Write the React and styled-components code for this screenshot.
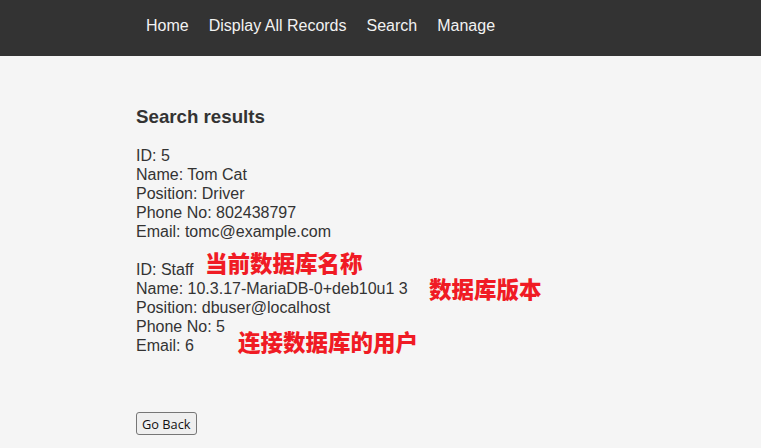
import styled, { createGlobalStyle } from "styled-components";

const GlobalStyle = createGlobalStyle`
  html, body {
    margin: 0;
    padding: 0;
    background: #f5f5f5;
  }
  body {
    font-family: "Liberation Sans", Arial, sans-serif;
    color: #333;
  }
`;

const Nav = styled.nav`
  height: 56px;
  background: #333;
  display: flex;
  align-items: center;
  padding-left: 136px;
`;

const NavLink = styled.a`
  color: #f2f2f2;
  font-size: 16px;
  padding: 0 10px;
  text-decoration: none;
  line-height: 50px;
  margin-top: -4px;
`;

const Main = styled.main`
  padding: 50px 136px 0;
`;

const Title = styled.h3`
  margin: 0 0 18px;
  font-size: 18.72px;
  font-weight: 700;
  line-height: 22px;
`;

const Record = styled.div`
  position: relative;
  font-size: 16px;
  line-height: 19px;
  margin-bottom: 19px;
`;

const Line = styled.div`
  position: relative;
  white-space: nowrap;
`;

const Note = styled.span`
  position: absolute;
  left: ${(p) => p.$left}px;
  top: ${(p) => p.$top}px;
  font-family: "Noto Sans CJK SC", sans-serif;
  font-weight: 900;
  font-size: 22.5px;
  line-height: 26px;
  color: #f01b24;
`;

const BackButton = styled.button`
  margin-top: 38px;
  font-family: "Open Sans", "Noto Sans", sans-serif;
  font-size: 12.8px;
  height: 23px;
  padding: 0 5px;
  color: #111;
  background: #efefef;
  border: 1px solid #767676;
  border-radius: 3px;
`;

const nav = ["Home", "Display All Records", "Search", "Manage"];

export default function App() {
  return (
    <>
      <GlobalStyle />
      <Nav>
        {nav.map((n) => (
          <NavLink key={n} href="#">
            {n}
          </NavLink>
        ))}
      </Nav>
      <Main>
        <Title>Search results</Title>
        <Record>
          <Line>ID: 5</Line>
          <Line>Name: Tom Cat</Line>
          <Line>Position: Driver</Line>
          <Line>Phone No: 802438797</Line>
          <Line>Email: tomc@example.com</Line>
        </Record>
        <Record>
          <Line>
            ID: Staff
            <Note $left={69} $top={-11}>当前数据库名称</Note>
          </Line>
          <Line>
            Name: 10.3.17-MariaDB-0+deb10u1 3
            <Note $left={293} $top={-4}>数据库版本</Note>
          </Line>
          <Line>Position: dbuser@localhost</Line>
          <Line>Phone No: 5</Line>
          <Line>
            Email: 6
            <Note $left={102} $top={-8}>连接数据库的用户</Note>
          </Line>
        </Record>
        <BackButton>Go Back</BackButton>
      </Main>
    </>
  );
}
